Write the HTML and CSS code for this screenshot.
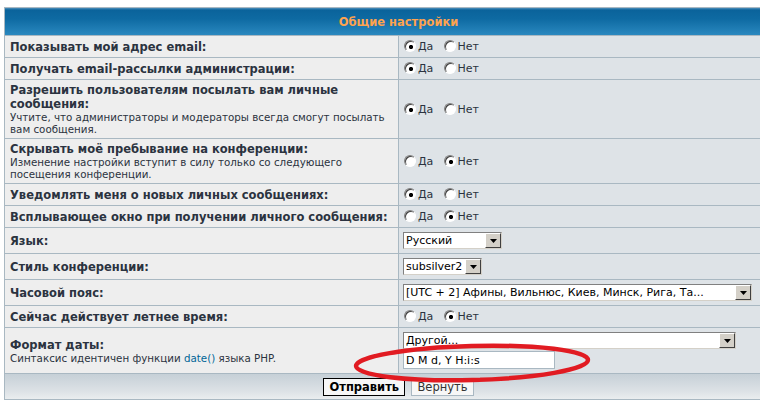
FILE: index.html
```html
<!DOCTYPE html>
<html lang="ru">
<head>
    <meta charset="UTF-8">
    <title>Личный раздел - Общие настройки</title>
    <link rel="stylesheet" href="styles.css">
</head>
<body>
    <form class="prefs-form" action="#" method="post">
        <table class="tablebg">
            <tr>
                <th colspan="2">Общие настройки</th>
            </tr>
            <tr class="row-radio">
                <td class="row1"><b class="genmed">Показывать мой адрес email:</b></td>
                <td class="row2">
                    <label><input type="radio" name="viewemail" checked>Да</label>
                    <label><input type="radio" name="viewemail">Нет</label>
                </td>
            </tr>
            <tr class="row-radio">
                <td class="row1"><b class="genmed">Получать email-рассылки администрации:</b></td>
                <td class="row2">
                    <label><input type="radio" name="massemail" checked>Да</label>
                    <label><input type="radio" name="massemail">Нет</label>
                </td>
            </tr>
            <tr class="row-tall">
                <td class="row1">
                    <b class="genmed">Разрешить пользователям посылать вам личные сообщения:</b>
                    <span class="gensmall">Учтите, что администраторы и модераторы всегда смогут посылать вам сообщения.</span>
                </td>
                <td class="row2">
                    <label><input type="radio" name="allowpm" checked>Да</label>
                    <label><input type="radio" name="allowpm">Нет</label>
                </td>
            </tr>
            <tr class="row-mid">
                <td class="row1">
                    <b class="genmed">Скрывать моё пребывание на конференции:</b>
                    <span class="gensmall">Изменение настройки вступит в силу только со следующего посещения конференции.</span>
                </td>
                <td class="row2">
                    <label><input type="radio" name="hideonline">Да</label>
                    <label><input type="radio" name="hideonline" checked>Нет</label>
                </td>
            </tr>
            <tr class="row-radio">
                <td class="row1"><b class="genmed">Уведомлять меня о новых личных сообщениях:</b></td>
                <td class="row2">
                    <label><input type="radio" name="notifypm" checked>Да</label>
                    <label><input type="radio" name="notifypm">Нет</label>
                </td>
            </tr>
            <tr class="row-radio">
                <td class="row1"><b class="genmed">Всплывающее окно при получении личного сообщения:</b></td>
                <td class="row2">
                    <label><input type="radio" name="popuppm">Да</label>
                    <label><input type="radio" name="popuppm" checked>Нет</label>
                </td>
            </tr>
            <tr class="row-select">
                <td class="row1"><b class="genmed">Язык:</b></td>
                <td class="row2">
                    <span class="select-wrap">
                        <select class="sel-lang"><option>Русский</option></select>
                        <span class="arrow"><svg width="7" height="4" viewBox="0 0 7 4"><path d="M0 0h7L3.5 4z" fill="#000"/></svg></span>
                    </span>
                </td>
            </tr>
            <tr class="row-select">
                <td class="row1"><b class="genmed">Стиль конференции:</b></td>
                <td class="row2">
                    <span class="select-wrap">
                        <select class="sel-style"><option>subsilver2</option></select>
                        <span class="arrow"><svg width="7" height="4" viewBox="0 0 7 4"><path d="M0 0h7L3.5 4z" fill="#000"/></svg></span>
                    </span>
                </td>
            </tr>
            <tr class="row-select">
                <td class="row1"><b class="genmed">Часовой пояс:</b></td>
                <td class="row2">
                    <span class="select-wrap">
                        <select class="sel-tz"><option>[UTC + 2] Афины, Вильнюс, Киев, Минск, Рига, Та...</option></select>
                        <span class="arrow"><svg width="7" height="4" viewBox="0 0 7 4"><path d="M0 0h7L3.5 4z" fill="#000"/></svg></span>
                    </span>
                </td>
            </tr>
            <tr class="row-radio">
                <td class="row1"><b class="genmed">Сейчас действует летнее время:</b></td>
                <td class="row2">
                    <label><input type="radio" name="dst">Да</label>
                    <label><input type="radio" name="dst" checked>Нет</label>
                </td>
            </tr>
            <tr class="row-date">
                <td class="row1">
                    <b class="genmed">Формат даты:</b>
                    <span class="gensmall">Синтаксис идентичен функции <a href="#">date()</a> языка PHP.</span>
                </td>
                <td class="row2">
                    <span class="select-wrap">
                        <select class="sel-date"><option>Другой...</option></select>
                        <span class="arrow"><svg width="7" height="4" viewBox="0 0 7 4"><path d="M0 0h7L3.5 4z" fill="#000"/></svg></span>
                    </span>
                    <input type="text" class="post" value="D M d, Y H:i:s">
                </td>
            </tr>
            <tr>
                <td class="cat" colspan="2">
                    <input class="btnmain" type="submit" value="Отправить">&nbsp;&nbsp;<input class="btnlite" type="reset" value="Вернуть">
                </td>
            </tr>
        </table>
    </form>

    <!-- red marker drawn over the date format field -->
    <svg class="marker" width="250" height="48" viewBox="0 0 250 48">
        <ellipse cx="122" cy="23" rx="116" ry="17" fill="none" stroke="#e11b22" stroke-width="4.5" transform="rotate(-1.5 122 23)"/>
    </svg>
</body>
</html>
```

FILE: styles.css
```css
html, body {
    overflow: hidden;
}

body {
    margin: 7px 0 0 4px;
    background-color: #fff;
    font-family: 'DejaVu Sans', Verdana, sans-serif;
    font-size: 10px;
    color: #2b3340;
}

.prefs-form {
    margin: 0;
}

.tablebg {
    width: 789px;
    background-color: #a9b8c2;
    border-spacing: 1px;
}

.tablebg th {
    height: 27px;
    padding: 0;
    color: #ffa34f;
    font-size: 11.5px;
    font-weight: bold;
    text-align: center;
    background: linear-gradient(#4f8fbb 0, #0a639b 2px, #0e6aa2 40%, #2a88bf 100%);
}

.tablebg td {
    padding: 3px 5px;
    vertical-align: middle;
    text-align: left;
}

.row1 {
    width: 50%;
    background-color: #eeeeee;
}

.row2 {
    background-color: #dee3e7;
}

.row-radio td {
    height: 15px;
}

.row-tall td {
    height: 52px;
}

.row-mid td {
    height: 38px;
}

.row-select td {
    height: 19px;
    padding-left: 4px;
}

.row-select .row1,
.row-date .row1 {
    padding-left: 5px;
}

.row-date td {
    height: 39px;
}

.row-date .row2 {
    padding-left: 4px;
}

.genmed {
    display: block;
    font-size: 11.5px;
    line-height: 14px;
}

.gensmall {
    display: block;
    font-size: 10.3px;
    line-height: 12px;
}

a {
    color: #006597;
    text-decoration: none;
}

label {
    font-size: 11px;
    margin-right: 7px;
}

input[type="radio"] {
    appearance: none;
    -webkit-appearance: none;
    width: 12px;
    height: 12px;
    margin: 0 2px 0 0;
    border-radius: 50%;
    border: 1px solid;
    border-color: #808080 #fff #fff #808080;
    box-shadow: inset 1px 1px 0 #404040;
    background: #fff;
    vertical-align: -2px;
}

input[type="radio"]:checked {
    background: radial-gradient(circle at 6px 6px, #000 0, #000 1.8px, #fff 2.4px);
}

.select-wrap {
    position: relative;
    display: inline-block;
    vertical-align: middle;
    line-height: 0;
}

.select-wrap select {
    appearance: none;
    -webkit-appearance: none;
    height: 17px;
    margin: 0;
    padding: 0 18px 0 2px;
    font-family: 'DejaVu Sans', Verdana, sans-serif;
    font-size: 11px;
    color: #000;
    background-color: #fff;
    border: 1px solid;
    border-color: #808080 #d4d0c8 #d4d0c8 #808080;
    border-radius: 0;
}

.arrow {
    position: absolute;
    top: 1px;
    right: 1px;
    width: 14px;
    height: 13px;
    display: flex;
    align-items: center;
    justify-content: center;
    background-color: #d4d0c8;
    border: 1px solid;
    border-color: #fff #404040 #404040 #fff;
}

.sel-lang {
    width: 99px;
}

.sel-style {
    width: 79px;
}

.sel-tz {
    width: 349px;
}

.sel-date {
    width: 333px;
}

.post {
    display: block;
    width: 152px;
    height: 18px;
    margin: 2px 0 0 0;
    padding: 0 2px;
    box-sizing: border-box;
    font-family: 'DejaVu Sans', Verdana, sans-serif;
    font-size: 11px;
    color: #000;
    background-color: #fff;
    border: 1px solid #a9b8c2;
}

.tablebg td.cat {
    height: 19px;
    text-align: center;
    background: linear-gradient(#c6d0d7, #dde2e6 70%, #eaedef);
}

.btnmain,
.btnlite {
    height: 18px;
    margin: 0;
    padding: 0 5px;
    font-family: 'DejaVu Sans', Verdana, sans-serif;
    font-size: 11.5px;
    color: #000;
    background-color: #f7f7f7;
    border-radius: 0;
    vertical-align: middle;
}

.btnmain {
    font-weight: bold;
    border: 1px solid #000;
}

.btnlite {
    color: #333;
    border: 1px solid #a9b8c2;
}

.marker {
    position: absolute;
    left: 350px;
    top: 340px;
}
```
